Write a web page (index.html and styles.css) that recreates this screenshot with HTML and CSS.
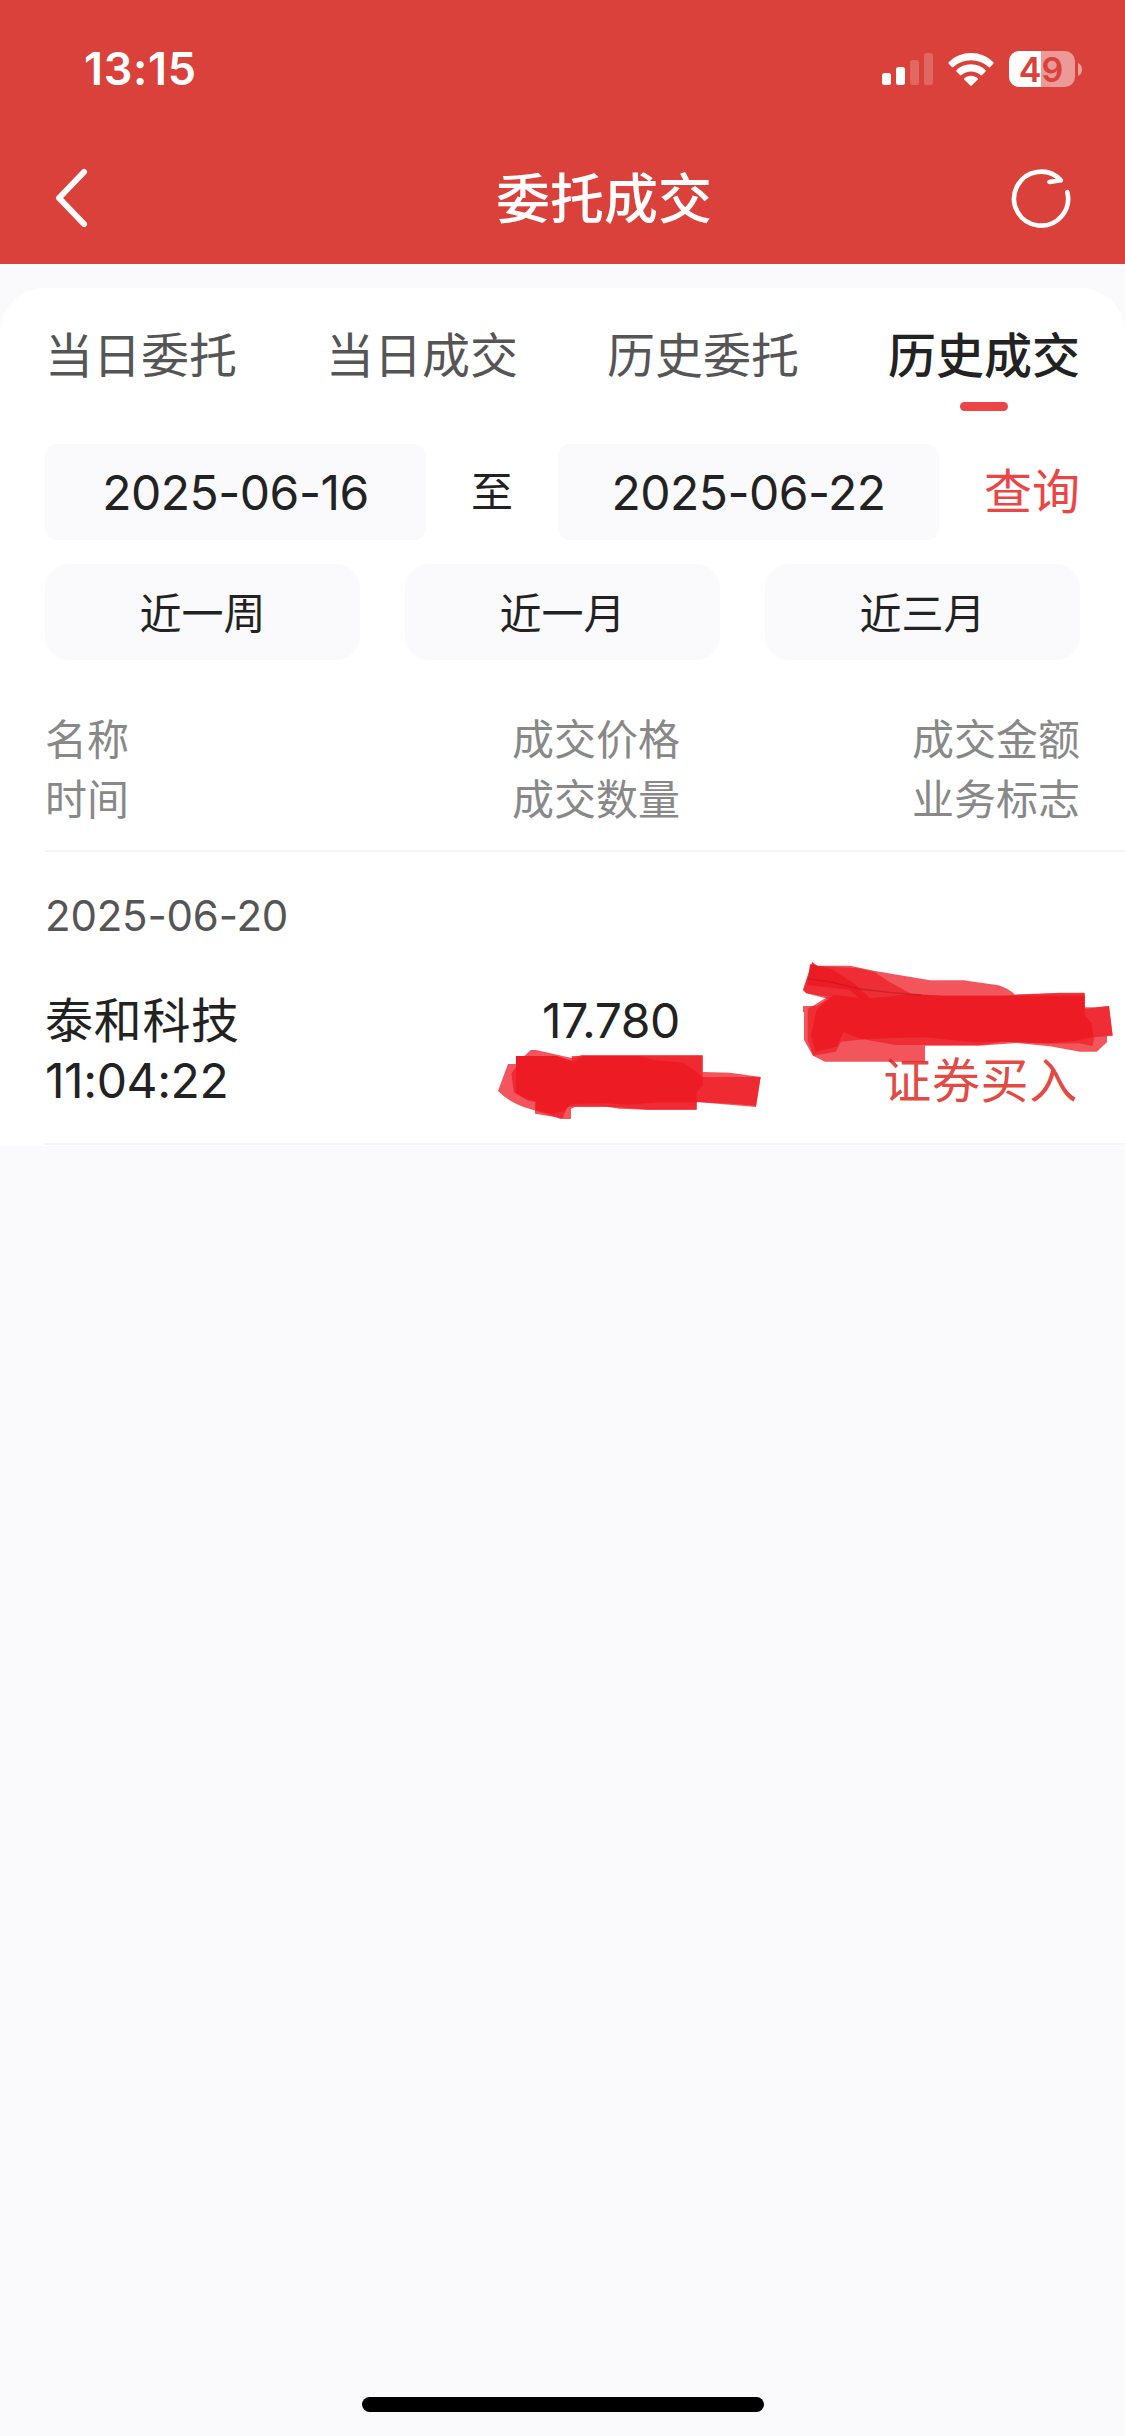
FILE: index.html
```html
<!DOCTYPE html>
<html lang="zh-CN">
<head>
<meta charset="utf-8">
<title>委托成交</title>
<link rel="stylesheet" href="styles.css">
</head>
<body>
<div class="screen">
  <header class="header">
    <div class="status">
      <span class="time">13:15</span>
      <div class="status-icons">
        <svg class="signal" width="51" height="32" viewBox="0 0 51 32" fill="#fff">
          <rect x="0" y="20" width="9" height="12" rx="2.5"/>
          <rect x="14" y="14" width="9" height="18" rx="2.5"/>
          <rect x="28" y="7" width="9" height="25" rx="2.5" opacity=".2"/>
          <rect x="42" y="0" width="9" height="32" rx="2.5" opacity=".2"/>
        </svg>
        <svg class="wifi" width="46" height="33" viewBox="0 0 46 33" fill="#fff">
          <path d="M23 0C32 0 39.600 3.400 45.300 9.200Q46 10 45.300 10.800L42.200 13.900Q41.400 14.600 40.600 13.900C35.700 9.500 29.700 7.200 23 7.200S10.300 9.500 5.400 13.900Q4.600 14.600 3.800 13.900L.7 10.800Q0 10 .7 9.200C6.400 3.400 14 0 23 0Z"/>
          <path d="M23 11.300C29 11.300 33.700 13.500 37.400 17Q38.200 17.900 37.400 18.700L34 22.100Q33.200 22.800 32.400 22.100C29.800 19.800 26.800 18.500 23 18.500S16.200 19.800 13.600 22.100Q12.800 22.800 12 22.100L8.600 18.700Q7.800 17.900 8.600 17C12.300 13.500 17 11.300 23 11.300Z"/>
          <path d="M23 22.800C25.800 22.800 28 23.800 29.600 25.200Q30.300 25.900 29.600 26.700L23.700 32.500Q23 33.100 22.300 32.500L16.400 26.700Q15.700 25.900 16.400 25.200C18 23.800 20.200 22.800 23 22.800Z"/>
        </svg>
        <div class="battery"><span class="level">49</span><svg class="nub" width="4" height="13" viewBox="0 0 4 13"><path d="M0 0C2.600 1.200 4 3.600 4 6.500S2.600 11.800 0 13Z" fill="#fff" opacity=".5"/></svg></div>
      </div>
    </div>
    <nav class="nav">
      <svg class="back" width="40" height="66" viewBox="0 0 40 66" fill="none" stroke="#fff" stroke-width="6" stroke-linecap="round" stroke-linejoin="round"><path d="M32 7L7 33L32 59"/></svg>
      <h1 class="title">委托成交</h1>
      <svg class="refresh" width="66" height="66" viewBox="0 0 66 66" fill="none" stroke="#fff" stroke-width="4.600" stroke-linecap="round" stroke-linejoin="round"><path d="M59.300 27.200A27 27 0 1 1 52.800 15.200L41.500 17"/></svg>
    </nav>
  </header>

  <main class="card">
    <div class="tabs">
      <div class="tab">当日委托</div>
      <div class="tab">当日成交</div>
      <div class="tab">历史委托</div>
      <div class="tab active">历史成交</div>
    </div>
    <div class="range">
      <div class="date">2025-06-16</div>
      <span class="to">至</span>
      <div class="date">2025-06-22</div>
      <span class="query">查询</span>
    </div>
    <div class="presets">
      <div class="preset">近一周</div>
      <div class="preset">近一月</div>
      <div class="preset">近三月</div>
    </div>
    <section class="columns">
      <div>名称<br>时间</div>
      <div>成交价格<br>成交数量</div>
      <div>成交金额<br>业务标志</div>
    </section>
    <section class="group">
      <div class="day">2025-06-20</div>
      <div class="record">
        <div class="cell"><span class="name">泰和科技</span><br>11:04:22</div>
        <div class="cell">17.780
          <svg class="scribble quantity" width="280" height="90" viewBox="0 0 840 270" fill="#ed1c24">
            <path opacity=".75" d="M54 72H78L122 30H138L245 54L275 45H638V96L720 98L812 111L798 201L620 186V209H472L388 206L350 200H255L243 207V237H212L180 226L120 207Q60 190 24 153Z"/>
            <path opacity=".75" d="M78 48H190L212 52L245 62V48H638V111H812L798 197L740 192L620 186V209H472L388 202L340 200H232L218 235L135 221V186L112 181L72 158L64 100L78 82Z"/>
            <path d="M78 48H200L250 66L280 48H450L490 60L580 68L612 90L638 111V137L620 155V187H500L420 194L340 190L243 192L222 214L184 221L138 210V184L112 178L78 158Z"/>
          </svg>
        </div>
        <div class="cell buy"><br><span class="name">证券买入</span>
          <svg class="scribble amount" width="330" height="120" viewBox="0 0 990 360" fill="#ed1c24">
            <path opacity=".75" d="M52 21L62 32H165L240 48L405 76H505L610 91Q640 100 660 119L795 113H869V157H900L942 153L953 242H936V262L905 290H855L765 274L665 264L550 272H390V320H90L54 302L27 255V172H24V153H65L98 131L34 115L24 105Z"/>
            <path opacity=".7" d="M52 21L70 34L185 39L238 51L282 80L350 117L440 122H630L665 119L795 115H869V162L942 153L953 242L898 247L892 274L855 265L765 266L625 260L560 270H300L205 253L138 260L122 290L54 302L38 255V162L98 125L34 115L24 105Z"/>
            <path d="M45 28L110 42L180 88L225 130L275 125L350 117L440 122H869V182L890 205L895 245L840 258L765 264L625 260L540 262L390 247L270 250L200 253L145 232L125 275L62 290L48 240L65 165L115 120L190 128L165 105L37 90Z"/>
            <path d="M37 70L115 83L195 102L290 113L380 120" fill="none" stroke="#b51620" stroke-width="4" opacity=".55"/>
          </svg>
        </div>
      </div>
    </section>
  </main>
  <div class="home"></div>
</div>
</body>
</html>
```
FILE: styles.css
```css
* { box-sizing: border-box; }
body {
  margin: 0;
  font-family: Inter, "Noto Sans CJK SC", sans-serif;
  color: #222;
  background: #fafafc;
}
.screen {
  width: 1125px;
  height: 2436px;
  display: flex;
  flex-direction: column;
  background: #fafafc;
}
svg { display: block; flex: none; }

.header {
  height: 264px;
  background: #da413a;
  color: #fff;
  margin-bottom: 24px;
  flex: none;
}
.status {
  height: 138px;
  padding: 0 43px 0 84px;
  display: flex;
  justify-content: space-between;
  align-items: center;
}
.time { font-size: 45px; font-weight: 600; line-height: 60px; letter-spacing: .7px; }
.status-icons { display: flex; align-items: center; }
.wifi { margin: 0 15px; }
.battery { display: flex; align-items: center; gap: 3px; }
.level {
  width: 66px;
  height: 36px;
  border-radius: 10px;
  background: linear-gradient(to right, #fff 32px, rgba(255, 255, 255, .47) 32px);
  color: #da413a;
  font-size: 34px;
  font-weight: 600;
  line-height: 37px;
  text-align: center;
  padding-right: 2px;
}
.nav {
  height: 120px;
  padding: 0 51px 0 52px;
  display: grid;
  grid-template-columns: 444px auto 1fr;
  align-items: center;
}
.title { margin: 0; padding-top: 3px; font-size: 54px; font-weight: 500; line-height: 72px; }
.refresh { justify-self: end; }

.card {
  height: 858px;
  background: #fff;
  border-radius: 45px 45px 0 0;
  flex: none;
}
.tabs {
  padding: 38px 45px 0;
  height: 156px;
  display: flex;
  justify-content: space-between;
}
.tab {
  font-size: 48px;
  line-height: 60px;
  color: #555;
  display: flex;
  flex-direction: column;
  align-items: center;
}
.tab.active { color: #222; font-weight: 500; }
.tab.active::after {
  content: "";
  width: 48px;
  height: 9px;
  margin-top: 16px;
  border-radius: 5px;
  background: #ec4545;
}
.range {
  padding: 0 45px;
  height: 96px;
  display: flex;
  align-items: center;
  justify-content: space-between;
}
.date {
  width: 381px;
  height: 96px;
  border-radius: 12px;
  background: #fafafc;
  font-size: 48px;
  line-height: 97px;
  letter-spacing: -.5px;
  text-align: center;
}
.to { font-size: 42px; line-height: 94px; }
.query { font-size: 48px; line-height: 60px; color: #ec4545; }
.presets {
  margin-top: 24px;
  padding: 0 45px;
  display: flex;
  gap: 45px;
}
.preset {
  flex: 1;
  height: 96px;
  border-radius: 24px;
  background: #fafafc;
  font-size: 42px;
  line-height: 100px;
  text-align: center;
}
.columns, .record {
  display: grid;
  grid-template-columns: 310px 325px 400px;
  line-height: 60px;
}
.columns > :nth-child(n+2), .cell:nth-child(n+2) { text-align: right; }
.columns {
  height: 192px;
  margin-left: 45px;
  padding-top: 50px;
  font-size: 42px;
  color: #888;
  border-bottom: 2px solid #f5f5f5;
}
.group {
  height: 293px;
  margin-left: 45px;
  padding-top: 34px;
  border-bottom: 2px solid #f5f5f5;
}
.day { font-size: 42px; line-height: 60px; letter-spacing: -.2px; color: #555; }
.record { margin-top: 45px; font-size: 48px; }
.cell { position: relative; height: 120px; letter-spacing: -.4px; }
.name { letter-spacing: .7px; }
.buy { color: #e24a43; padding-right: 2px; }
.scribble { position: absolute; }
.quantity { left: 135px; top: 49px; }
.amount { left: 115px; top: -36px; }

.home {
  width: 402px;
  height: 15px;
  margin: auto auto 24px;
  border-radius: 8px;
  background: #000;
}
```
